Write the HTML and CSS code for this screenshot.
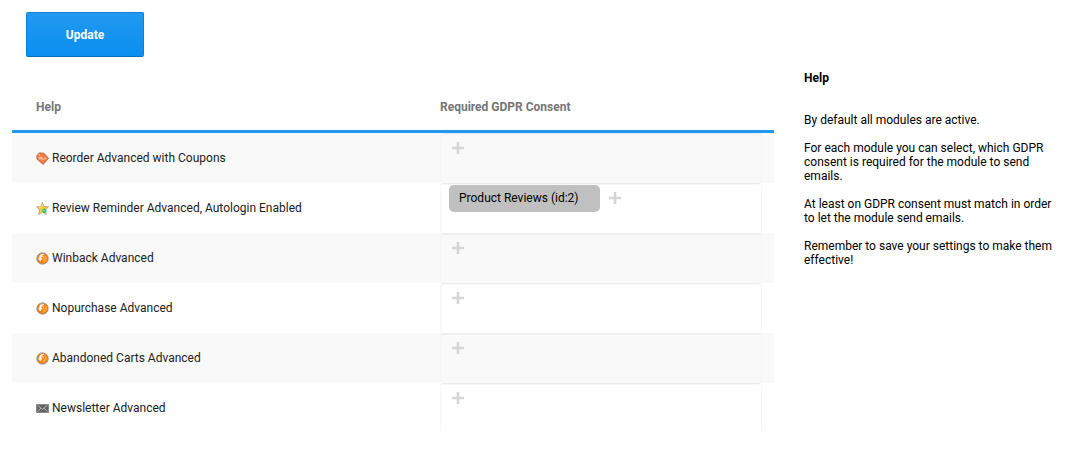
FILE: index.html
```html
<!DOCTYPE html>
<html lang="en">
<head>
<meta charset="utf-8">
<title>GDPR Consent</title>
<link rel="stylesheet" href="styles.css">
</head>
<body>
<svg width="0" height="0" class="defs">
  <symbol id="plus" viewBox="0 0 12 12"><path d="M4.700 0h2.600v4.700H12v2.600H7.300V12H4.700V7.300H0V4.700h4.700z" fill="currentColor"/></symbol>
  <symbol id="swirl" viewBox="0 0 13 13">
    <circle cx="6.500" cy="6.500" r="5.600" fill="#f5821c" stroke="#8f8880" stroke-width="1"/>
    <path d="M9.300 3.800c1.300 2.300.4 5.200-2.600 6" fill="none" stroke="#ffb03a" stroke-width="1.600"/>
    <path d="M7.600 1.700C4.500 1.800 3 3.700 3.200 6.200H2L4.300 9.200 6.400 6.200H5.300C5.200 4.600 5.900 3.300 8 2.700z" fill="#fff"/>
    <path d="M6 4.600h1.500v2.200" fill="none" stroke="#ffe0bd" stroke-width=".8"/>
  </symbol>
</svg>
<main class="page">
  <section class="main">
    <button class="update">Update</button>
    <div class="table">
      <div class="head"><span>Help</span><span>Required GDPR Consent</span></div>
      <div class="row">
        <div class="name"><svg class="icon" viewBox="0 0 13 13"><path d="M.800 3.300 3.500.800 8 1.200l4.600 5.100-5.400 6.100L1 7.200z" fill="#f07a3e" stroke="#b0694a" stroke-width=".8"/><path d="M3 7V5.300h1.500V7zM5.500 7.500V4.600m0 1.500h1.600v1.700H5.500M8.300 7.700V5.900h1.500v1.400" fill="none" stroke="#ffd3bd" stroke-width=".7"/><circle cx="3.300" cy="3" r=".7" fill="#fff"/></svg><span>Reorder Advanced with Coupons</span></div>
        <div class="box"><svg class="plus"><use href="#plus"/></svg></div>
      </div>
      <div class="row">
        <div class="name"><svg class="icon" viewBox="0 0 13 13"><path d="m6.500.500 1.700 4 4.300.4-3.200 2.900 1 4.600-3.800-2.400-3.800 2.400 1-4.600L.500 4.900l4.300-.4z" fill="#fbc944" stroke="#a8946c" stroke-width=".7"/><path d="m6.300 2.500-1 2.600-2.500.3" fill="none" stroke="#ffe68c" stroke-width=".8"/><circle cx="8.400" cy="8.700" r="2.200" fill="#3fc46b"/><circle cx="8.200" cy="8.400" r=".7" fill="#8fe09b"/></svg><span>Review Reminder Advanced, Autologin Enabled</span></div>
        <div class="box"><span class="tag">Product Reviews (id:2)</span><svg class="plus"><use href="#plus"/></svg></div>
      </div>
      <div class="row">
        <div class="name"><svg class="icon"><use href="#swirl"/></svg><span>Winback Advanced</span></div>
        <div class="box"><svg class="plus"><use href="#plus"/></svg></div>
      </div>
      <div class="row">
        <div class="name"><svg class="icon"><use href="#swirl"/></svg><span>Nopurchase Advanced</span></div>
        <div class="box"><svg class="plus"><use href="#plus"/></svg></div>
      </div>
      <div class="row">
        <div class="name"><svg class="icon"><use href="#swirl"/></svg><span>Abandoned Carts Advanced</span></div>
        <div class="box"><svg class="plus"><use href="#plus"/></svg></div>
      </div>
      <div class="row">
        <div class="name"><svg class="icon" viewBox="0 0 13 13"><path d="M.500 2.500h12v8H.500z" fill="#666" stroke="#888"/><path d="m1.500 3.300 5 3.900 5-3.900M1.500 9.700l3.300-3.500m6.700 3.500L8.200 6.200" fill="none" stroke="#c4c4c4" stroke-width=".8"/></svg><span>Newsletter Advanced</span></div>
        <div class="box"><svg class="plus"><use href="#plus"/></svg></div>
      </div>
    </div>
  </section>
  <aside class="help">
    <h2>Help</h2>
    <p>By default all modules are active.</p>
    <p>For each module you can select, which GDPR consent is required for the module to send emails.</p>
    <p>At least on GDPR consent must match in order to let the module send emails.</p>
    <p>Remember to save your settings to make them effective!</p>
  </aside>
</main>
</body>
</html>
```
FILE: styles.css
```css
* { box-sizing: border-box; }
body { margin: 0; background: #fff; color: #000; font: 12px/14px Roboto, sans-serif; }
.defs { display: block; }
.page { display: flex; gap: 30px; padding: 12px 12px 0; }
.main { width: 762px; }
.update {
  display: block; width: 118px; height: 45px; margin: 0 0 0 14px; padding: 0;
  border: 1px solid #1080d4; border-bottom-color: #0b6fb9; border-radius: 2px;
  background: linear-gradient(#2199f0, #0a8ff0);
  color: #fff; font: bold 12px/14px Roboto, sans-serif;
}
.head, .row { display: grid; grid-template-columns: 404px 322px; padding: 0 12px 0 24px; }
.head {
  height: 76px; padding-top: 43px; border-bottom: 3px solid #2199f0;
  color: #757575; font-weight: bold;
}
.row { height: 50px; color: #212121; }
.row:nth-child(even) { background: #f9f9f9; }
.name { display: flex; align-items: center; gap: 3px; }
.icon { width: 13px; height: 13px; margin-top: 1px; }
.box {
  display: flex; align-items: flex-start; gap: 9px; padding: 1px 8px;
  border: 1px solid #f6f6f6; border-top-color: #ececec; border-bottom: 0; border-radius: 3px 3px 0 0;
  box-shadow: inset 0 1px 1px rgba(0, 0, 0, .03);
}
.row:last-child .box { height: 48px; }
.plus { width: 12px; height: 12px; margin: 7px 3px; color: #d5d5d5; }
.tag {
  width: 151px; height: 27px; padding: 6px 10px 0; border-radius: 5px;
  background: #c0c0c0; color: #000;
}
.tag + .plus { margin-left: 0; }
.help { width: 250px; padding-top: 59px; }
.help h2 { margin: 0 0 28px; font-size: 12px; line-height: 14px; }
.help p { margin: 0 0 14px; }
```
